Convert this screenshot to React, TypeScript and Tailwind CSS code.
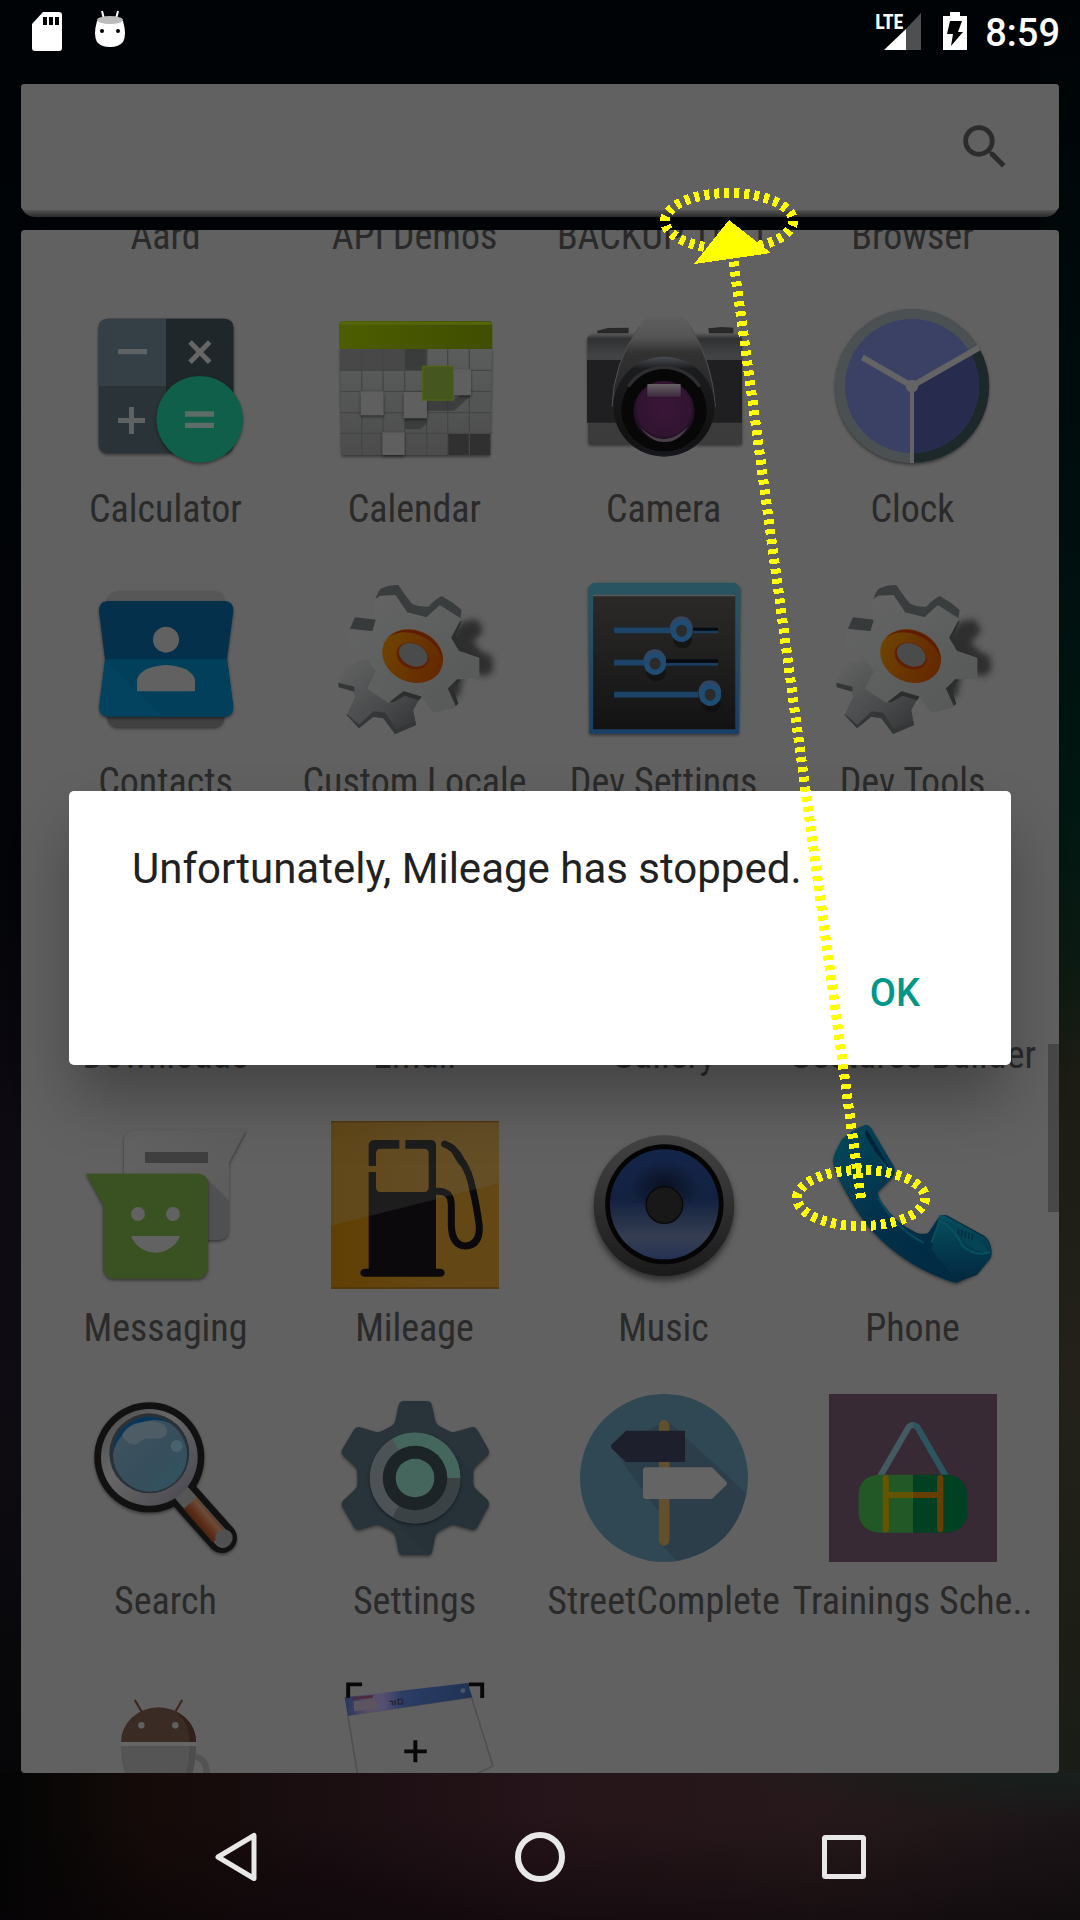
import React from "react";

type Art = { children: React.ReactNode; box: string };

function Art({ box, children }: Art) {
  return (
    <svg viewBox={box} preserveAspectRatio="none" className="size-42 shrink-0" aria-hidden="true">
      {children}
    </svg>
  );
}

const softShadow = { filter: "drop-shadow(0 5px 4px rgba(0,0,0,.45))" };

function CalculatorIcon() {
  return (
    <Art box="66 66 504 504">
      <g style={softShadow}>
        <rect x="116" y="116" width="404" height="404" rx="26" fill="#293338" />
        <path d="M318 116H142a26 26 0 0 0-26 26v176h202z" fill="#353f46" />
        <path d="M318 116h176a26 26 0 0 1 26 26v176H318z" fill="#1f272a" />
        <path d="M318 318h202v30H318z" fill="#1f272a" />
      </g>
      <path d="M174 207h87v16h-87zM174 414h33v-33h15v33h33v15h-33v33h-15v-33h-33z" fill="#5f6262" />
      <path d="M390 186l59 61M449 186l-59 61" stroke="#666" strokeWidth="15" />
      <circle cx="419" cy="418" r="130" fill="#0f5f4a" style={softShadow} />
      <path d="M375 394h87v16h-87zM375 428h87v16h-87z" fill="#5b6d66" />
    </Art>
  );
}

function CalendarIcon() {
  return (
    <Art box="813 66 504 504">
      <defs>
        <linearGradient id="calSheet" x1="0" y1="0" x2="0" y2="1">
          <stop offset="0" stopColor="#5b5d5d" />
          <stop offset="1" stopColor="#4c4c4c" />
        </linearGradient>
        <linearGradient id="calTop" x1="0" y1="0" x2="1" y2="0">
          <stop offset="0" stopColor="#4d5d00" />
          <stop offset="1" stopColor="#3f4e00" />
        </linearGradient>
      </defs>
      <path d="M840 205h456l-6 320H845z" fill="url(#calSheet)" style={softShadow} />
      <path d="M840 205h262v66H840z" fill="#484848" />
      <path d="M1034 205h66v66h-66z" fill="#3a3b3b" />
      <path d="M1161 460h130v65h-130z" fill="#303030" />
      <path d="M905 205v320M969 205v320M1034 205v320M1100 205v320M1163 205v320M1228 205v320M840 271h455M840 334h455M840 398h455M840 460h455" stroke="#444646" strokeWidth="4" />
      <path d="M1100 360h80l22-14h31l-50 46h-83v40l-20 16h-45v-32z" fill="#2f3030" opacity=".6" />
      <g style={softShadow}>
        <path d="M902 334h69v72h-69zM1031 336h70v79h-70zM967 457h67v68h-67zM1180 268h53v78h-53z" fill="#5f5f5f" />
      </g>
      <path d="M1088 259h92v101h-92z" fill="#45571e" stroke="#4c6414" strokeWidth="4" />
      <path d="M849 123h437q10 0 11 12v72H837v-72q2-12 12-12z" fill="url(#calTop)" />
      <path d="M849 125h437q8 0 10 9H839q2-9 10-9z" fill="#56660a" />
    </Art>
  );
}

function CameraIcon() {
  return (
    <Art box="120 66 504 504">
      <defs>
        <linearGradient id="camBody" x1="0" y1="0" x2="0" y2="1">
          <stop offset="0" stopColor="#5c5c5c" />
          <stop offset=".05" stopColor="#303132" />
          <stop offset=".2" stopColor="#424344" />
          <stop offset="1" stopColor="#3a3a3b" />
        </linearGradient>
        <linearGradient id="camHump" x1="0" y1="0" x2="0" y2="1">
          <stop offset="0" stopColor="#5e5e5e" />
          <stop offset=".22" stopColor="#555" />
          <stop offset=".4" stopColor="#323232" />
          <stop offset="1" stopColor="#242424" />
        </linearGradient>
        <linearGradient id="camRing" x1="0" y1="0" x2="0" y2="1">
          <stop offset="0" stopColor="#4a4e55" />
          <stop offset=".12" stopColor="#1b1c1e" />
          <stop offset=".8" stopColor="#111" />
          <stop offset="1" stopColor="#17171f" />
        </linearGradient>
        <radialGradient id="camGlass" cx=".5" cy=".45" r=".55">
          <stop offset="0" stopColor="#3a1538" />
          <stop offset=".8" stopColor="#301430" />
          <stop offset="1" stopColor="#100a10" />
        </radialGradient>
        <linearGradient id="camShine" x1="0" y1="0" x2="0" y2="1">
          <stop offset="0" stopColor="#666066" />
          <stop offset="1" stopColor="#3e2a3e" />
        </linearGradient>
      </defs>
      <path d="M172 152l32-8 62-1v26h-94zM505 145l40-4 35 2v24h-72z" fill="#292929" />
      <g style={softShadow}>
        <path d="M142 174q4-10 20-14h420q20 4 24 14v314q0 5-8 5H153q-7 0-8-5z" fill="url(#camBody)" />
      </g>
      <path d="M141 240h465v188H141z" fill="#1f1f22" />
      <path d="M330 112h90q22 4 32 28 66 110 74 240H216q4-130 82-240 12-24 32-28z" fill="url(#camHump)" />
      <path d="M216 380q4-130 82-240M452 140q66 110 74 240" fill="none" stroke="#505050" strokeWidth="3" />
      <ellipse cx="372" cy="380" rx="152" ry="150" fill="url(#camRing)" />
      <ellipse cx="372" cy="390" rx="128" ry="124" fill="#070707" />
      <path d="M265 320a125 120 0 0 1 214 0" fill="none" stroke="#2e2e30" strokeWidth="10" />
      <circle cx="372" cy="395" r="92" fill="url(#camGlass)" />
      <path d="M322 312h100v38H322z" fill="url(#camShine)" />
      <path d="M300 440q70 75 144 0-30 48-72 46-40 0-72-46z" fill="#5a525a" opacity=".75" />
    </Art>
  );
}

function ClockIcon() {
  return (
    <Art box="870 66 504 504">
      <g style={softShadow}>
        <circle cx="1119" cy="318" r="231" fill="#4b5153" />
      </g>
      <path d="M1119 318L1320 203A231 231 0 0 1 1119 549z" fill="#1d282b" />
      <circle cx="1119" cy="318" r="201" fill="#3b4165" />
      <path d="M1119 318L1293 218A201 201 0 0 1 1119 519z" fill="#272c4f" />
      <path d="M970 232L1119 318L1320 203" fill="none" stroke="#646464" strokeWidth="18" />
      <path d="M1119 318v231" stroke="#646464" strokeWidth="12" />
      <circle cx="1119" cy="318" r="19" fill="#646464" />
    </Art>
  );
}

function ContactsIcon() {
  return (
    <Art box="66 45 504 504">
      <g style={softShadow}>
        <rect x="143" y="93" width="349" height="407" rx="32" fill="#575757" />
        <rect x="143" y="440" width="349" height="60" rx="28" fill="#414141" />
      </g>
      <g style={softShadow}>
        <path d="M143 123h351q27 2 26 30l-19 144H135L117 153q-1-28 26-30z" fill="#04304b" />
        <path d="M135 297h366l19 144q0 27-27 29H144q-27-2-27-29z" fill="#034360" />
        <path d="M135 297l173 173h185q27-2 27-29l-19-144z" fill="#023f5b" />
      </g>
      <circle cx="318" cy="239" r="39" fill="#616161" />
      <path d="M231 394v-35q12-40 87-44 75 4 87 44v35z" fill="#616161" />
    </Art>
  );
}

function GearIcon({ id }: { id: string }) {
  return (
    <Art box="813 45 504 504">
      <defs>
        <linearGradient id={`${id}Face`} x1="0" y1="0" x2="1" y2="1">
          <stop offset="0" stopColor="#656565" />
          <stop offset="1" stopColor="#565858" />
        </linearGradient>
        <linearGradient id={`${id}Back`} x1="0" y1="0" x2="1" y2="1">
          <stop offset="0" stopColor="#646464" />
          <stop offset=".6" stopColor="#47494a" />
          <stop offset="1" stopColor="#303232" />
        </linearGradient>
        <linearGradient id={`${id}Hub`} x1="0" y1="0" x2="1" y2="0">
          <stop offset="0" stopColor="#6e4300" />
          <stop offset="1" stopColor="#652800" />
        </linearGradient>
        <filter id={`${id}Blur`} x="-50%" y="-50%" width="200%" height="200%">
          <feGaussianBlur stdDeviation="9" />
        </filter>
      </defs>
      <path d="M1170 230l35-45 45-8 20 35-30 35 25 28 30 12 6 45-28 18-60-25-15 80-30 20-40-60z" fill="#2e2e2e" filter={`url(#${id}Blur)`} />
      <path d="M835 370l15-52 75-21 25 38-25 50 60 40 45-35 55 15-25 45 8 45-63 27-35-47-30-5-43 35-37-40 25-55-5-18-45-12z" fill={`url(#${id}Back)`} />
      <path d="M835 368l48 12v15l-47-13zM860 462l38 32 43-40 35 4 32 50 57-25 3 12-63 27-35-47-30-5-43 35-37-40z" fill="#343737" />
      <path d="M945 120q10-30 20-35 26-12 50-10 22 34 42 57 24 10 48 8 20-22 40-32 34 18 60 42l-5 32-60-36-40 30-60-14-35-55z" fill="#3a3d3d" />
      <path d="M870 206l15-34 70 8-15 34z" fill="#373a3a" />
      <path d="M985 425l45-36 57 18-9 14-44-14-34 20zM1195 275l-25-43 28-52 6 4-18 46 26 38zM1185 440l-22-55 28-28 10 2-20 28 14 44z" fill="#2c2e2e" />
      <path
        d="M942 123l20-13 43-2 35 52 60 15 40-36 60 38-30 56 25 42 60 20v58l-65 2-30 30 25 55-65 15-35-48-55-17-45 35-60-40 25-50-25-38-60-25v-55l75-2 10-35z"
        fill={`url(#${id}Face)`}
        stroke={`url(#${id}Face)`}
        strokeWidth="6"
        strokeLinejoin="round"
      />
      <g transform="rotate(25 1058 288)">
        <ellipse cx="1058" cy="288" rx="94" ry="78" fill={`url(#${id}Hub)`} />
        <path d="M968 268a94 78 0 0 1 180 0 96 70 0 0 0-180 0z" fill="#5f1c00" />
        <ellipse cx="1058" cy="288" rx="50" ry="38" fill="#601f00" />
        <ellipse cx="1058" cy="284" rx="45" ry="33" fill="#4a4b4b" />
      </g>
    </Art>
  );
}

function Knob({ x, y }: { x: number; y: number }) {
  return (
    <g>
      <ellipse cx={x + 4} cy={y + 28} rx="28" ry="24" fill="#0d0d0d" opacity=".6" />
      <ellipse cx={x} cy={y - 9} rx="33" ry="34" fill="#37445e" />
      <ellipse cx={x + 1} cy={y} rx="24" ry="26" fill="#2b2b2b" stroke="#1f4c72" strokeWidth="16" />
    </g>
  );
}

function DevSettingsIcon() {
  return (
    <Art box="116 45 488 504">
      <defs>
        <linearGradient id="devFrame" x1="0" y1="0" x2="0" y2="1">
          <stop offset="0" stopColor="#285560" />
          <stop offset=".3" stopColor="#275064" />
          <stop offset="1" stopColor="#183f67" />
        </linearGradient>
        <linearGradient id="devPlate" x1="0" y1="0" x2="0" y2="1">
          <stop offset="0" stopColor="#2b2a29" />
          <stop offset="1" stopColor="#131313" />
        </linearGradient>
      </defs>
      <path d="M140 82l14-14h412l16 14-4 439H143z" fill="url(#devFrame)" style={softShadow} />
      <path d="M154 104h413v404H154z" fill="url(#devPlate)" />
      <path d="M154 106h413" stroke="#555a5c" strokeWidth="5" />
      <path d="M445 208h72M365 303h152" stroke="#060b12" strokeWidth="10" />
      <path d="M445 216h72M365 313h152" stroke="#1a3c5f" strokeWidth="8" />
      <path d="M215 211h165M215 308h90M215 404h245" stroke="#1c4468" strokeWidth="17" />
      <Knob x={410} y={212} />
      <Knob x={333} y={311} />
      <Knob x={493} y={404} />
    </Art>
  );
}

function MessagingIcon() {
  return (
    <Art box="66 273 504 504">
      <defs>
        <linearGradient id="msgBack" x1="0" y1="0" x2="1" y2="1">
          <stop offset="0" stopColor="#636363" />
          <stop offset="1" stopColor="#5a5a5a" />
        </linearGradient>
      </defs>
      <path d="M226 301h332l-51 97v200q-2 30-32 32H192V335q2-32 34-34z" fill="url(#msgBack)" style={softShadow} />
      <path d="M430 436l77 76v86q-2 30-32 32h-45z" fill="#4f5051" />
      <path d="M255 366h189v33H255z" fill="#404040" />
      <path d="M78 431h336q28 2 30 30v253q-2 30-32 32H161q-30-2-32-32V524z" fill="#3a5121" style={softShadow} />
      <circle cx="234" cy="552" r="21" fill="#626262" />
      <circle cx="339" cy="552" r="21" fill="#626262" />
      <path d="M213 618h147a79 79 0 0 1-147 0z" fill="#626262" />
    </Art>
  );
}

function MileageIcon() {
  return (
    <Art box="813 273 504 504">
      <defs>
        <linearGradient id="fuelBase" x1="0" y1="0" x2="1" y2="0">
          <stop offset="0" stopColor="#613f03" />
          <stop offset=".6" stopColor="#634714" />
          <stop offset="1" stopColor="#634815" />
        </linearGradient>
      </defs>
      <path d="M813 273h504v504H813z" fill="url(#fuelBase)" />
      <path d="M926 408v-62q2-16 18-16h74v26h-56q-14 0-14 14v38zM1036 330h76q16 0 16 16v370h14q12 2 12 12t-12 12H914q-13-2-13-12t13-12h12V426h22v46q0 14 14 14h130q14 0 14-14V370q0-14-14-14h-56z" fill="#0b090b" />
      <path d="M1128 484q46-4 46 42v60q2 60 42 62 44-2 42-60-8-60-20-110-8-50-36-90-16-34-48-46" fill="none" stroke="#0b090b" strokeWidth="21" strokeLinecap="round" strokeLinejoin="round" />
      <path d="M1178 360q30 10 37 40l-8 12q-10-4-29-40z" fill="#0b090b" />
      <path d="M813 273h504v187l-504 127z" fill="#666" opacity=".22" />
      <path d="M813 275h504M813 774h504" stroke="#4d3810" strokeWidth="4" />
    </Art>
  );
}

function MusicIcon() {
  return (
    <Art box="116 273 488 504">
      <defs>
        <linearGradient id="spkRim" x1="0" y1="0" x2="0" y2="1">
          <stop offset="0" stopColor="#444" />
          <stop offset="1" stopColor="#1a1a1a" />
        </linearGradient>
        <linearGradient id="spkCone" x1="0" y1="0" x2="0" y2="1">
          <stop offset="0" stopColor="#14264b" />
          <stop offset=".45" stopColor="#12213f" />
          <stop offset=".8" stopColor="#353e52" />
          <stop offset="1" stopColor="#243154" />
        </linearGradient>
        <radialGradient id="spkShade">
          <stop offset="0" stopColor="#0a1020" />
          <stop offset="1" stopColor="#0a1020" stopOpacity="0" />
        </radialGradient>
      </defs>
      <ellipse cx="360" cy="527" rx="204" ry="211" fill="url(#spkRim)" style={{ filter: "drop-shadow(0 14px 9px rgba(0,0,0,.5))" }} />
      <ellipse cx="361" cy="523" rx="172" ry="180" fill="#050505" />
      <ellipse cx="361" cy="523" rx="158" ry="165" fill="url(#spkCone)" />
      <ellipse cx="361" cy="470" rx="100" ry="80" fill="url(#spkShade)" />
      <ellipse cx="361" cy="525" rx="53" ry="55" fill="#181818" stroke="#080808" strokeWidth="4" />
    </Art>
  );
}

function PhoneIcon() {
  return (
    <Art box="842 273 488 504">
      <defs>
        <linearGradient id="handset" x1="0" y1="0" x2="1" y2="1">
          <stop offset="0" stopColor="#064c5e" />
          <stop offset=".45" stopColor="#03304a" />
          <stop offset="1" stopColor="#00283f" />
        </linearGradient>
        <linearGradient id="handsetEnd" x1="0" y1="0" x2="0" y2="1">
          <stop offset="0" stopColor="#07515f" />
          <stop offset=".45" stopColor="#043c50" />
          <stop offset="1" stopColor="#02283f" />
        </linearGradient>
      </defs>
      <path d="M948 284q10 0 18 12l66 116q4 12-4 28l-44 46q0 12 12 32 40 62 100 90 30 8 36-2l30-46q8-8 22-4l110 62q20 16 20 52-2 12-8 18l-34 42-58 28q-12 0-30-8-70-26-126-66-100-70-158-182-46-80-46-112 2-20 26-62 28-28 68-44z" fill="url(#handset)" style={softShadow} />
      <path d="M1162 556q8-4 22 4l110 62q20 16 20 52-2 12-8 18l-34 42-58 22-74-98z" fill="url(#handsetEnd)" />
      <path d="M1172 566q50 44 70 76 40 30 62 28-4-22-20-36-60-40-112-68z" fill="#044455" />
      <path d="M1140 638l24-66q40 20 66 76 40 34 80 18" fill="none" stroke="#08515f" strokeWidth="6" />
      <path d="M882 330q30-16 62-20l68 110M985 505q50 90 130 132" fill="none" stroke="#064a5b" strokeWidth="6" strokeLinecap="round" />
      <path d="M950 296q40 66 68 118-40-36-72-102z" fill="#02253a" />
      <path d="M1218 596v18M1228 600v20M1238 604v20M1248 608v20M1258 612v18" stroke="#022d3c" strokeWidth="4" />
    </Art>
  );
}

function SearchAppIcon() {
  return (
    <Art box="66 72 504 504">
      <defs>
        <linearGradient id="magRim" x1="0" y1="0" x2="1" y2="1">
          <stop offset="0" stopColor="#4a4a4a" />
          <stop offset=".4" stopColor="#676767" />
          <stop offset="1" stopColor="#45454e" />
        </linearGradient>
        <linearGradient id="magGlass" x1="0" y1="0" x2="1" y2="1">
          <stop offset="0" stopColor="#42535f" />
          <stop offset=".55" stopColor="#374e5c" />
          <stop offset="1" stopColor="#2f5460" />
        </linearGradient>
        <linearGradient id="magGrip" gradientUnits="userSpaceOnUse" x1="400" y1="470" x2="460" y2="420">
          <stop offset="0" stopColor="#3c1a0c" />
          <stop offset=".4" stopColor="#5f2f1a" />
          <stop offset=".7" stopColor="#6c4c3a" />
          <stop offset="1" stopColor="#4d2413" />
        </linearGradient>
      </defs>
      <g style={softShadow}>
        <path d="M372 376L486 504" stroke="#111" strokeWidth="90" strokeLinecap="round" />
        <circle cx="268" cy="262" r="165" fill="#111" />
      </g>
      <path d="M368 372L488 508" stroke="#555" strokeWidth="52" strokeLinecap="round" />
      <path d="M390 400L478 500" stroke="url(#magGrip)" strokeWidth="52" />
      <circle cx="492" cy="504" r="26" fill="#505050" />
      <circle cx="268" cy="262" r="145" fill="url(#magRim)" />
      <circle cx="268" cy="250" r="120" fill="#2a3238" />
      <circle cx="270" cy="254" r="111" fill="url(#magGlass)" />
      <path d="M158 252a112 112 0 0 1 172-94q-50-18-100 6-60 30-72 88z" fill="#07365c" />
      <path d="M186 196q20-40 84-42 50 2 52 30-2 26-44 22-30-4-46 16-30 8-46-26z" fill="#4e5c65" />
      <circle cx="350" cy="228" r="18" fill="#4a626b" />
    </Art>
  );
}

function SettingsIcon() {
  return (
    <Art box="813 72 504 504">
      <g style={softShadow}>
        <path d="M1030 93h72q12 1 14 14l10 46q3 10 12 15l30 16q8 3 18 1l50-14q10-2 16 8l34 60q3 10-4 18l-34 32q-8 8-8 18v36q0 8 8 16l34 32q7 8 4 18l-34 62q-6 10-16 8l-50-14q-10-2-18 2l-30 16q-9 6-12 15l-10 48q-2 8-12 9h-76q-10-1-12-9l-10-48q-3-10-12-15l-30-16q-8-4-18-2l-48 14q-10 2-16-8l-36-62q-3-10 4-18l34-32q8-8 8-16v-36q0-10-8-18l-34-32q-7-8-4-18l36-60q6-10 16-8l48 14q10 2 18-1l30-16q9-5 12-15l10-46q2-13 14-14z" fill="#28343a" />
      </g>
      <path d="M1165 230l74 74v36q0 8 8 16l34 32q7 8 4 18l-34 62q-6 10-16 8l-50-14q-10-2-18 2l-30 16q-9 6-12 15l-10 48-12 9-100-100z" fill="#263238" />
      <circle cx="1065" cy="324" r="136" fill="#4d5256" style={softShadow} />
      <path d="M1065 324L997 206A136 136 0 0 1 1201 324z" fill="#44665d" />
      <path d="M1065 324H1201A136 136 0 0 1 997 442z" fill="#3a4245" />
      <circle cx="1065" cy="324" r="97" fill="#1d2427" />
      <circle cx="1065" cy="324" r="58" fill="#45665d" />
    </Art>
  );
}

function StreetCompleteIcon() {
  return (
    <Art box="116 72 488 504">
      <ellipse cx="360" cy="324" rx="244" ry="252" fill="#304854" />
      <path d="M370 152l228 216q-28 170-202 204l-48-54V430L207 230z" fill="#2c3e4a" />
      <path d="M345 168q2-16 15-18 14 2 16 18v342q-2 16-16 18-13-2-15-18z" fill="#62502c" />
      <path d="M250 182h171v94H250l-43-42q-2-5 0-10z" fill="#1d202c" />
      <path d="M306 292h193l43 44q2 4 0 8l-43 43H306q-7-1-7-8v-79q0-7 7-8z" fill="#646464" />
    </Art>
  );
}

function TrainingsIcon() {
  return (
    <Art box="839 72 488 504">
      <path d="M839 72h488v504H839z" fill="#372a34" />
      <path d="M988 318l82-146q5-7 13-7" fill="none" stroke="#445a61" strokeWidth="18" />
      <path d="M1083 165q8 0 13 7l82 146" fill="none" stroke="#2d5560" strokeWidth="18" />
      <path d="M1083 314H983q-56 4-58 60v56q4 52 58 58h100z" fill="#215826" />
      <path d="M1083 314h100q54 4 58 60v56q-4 52-58 58h-100z" fill="#004124" />
      <path d="M1004 366h79v18h-79z" fill="#655500" />
      <path d="M1083 366h79v18h-79z" fill="#663f00" />
      <rect x="995" y="315" width="18" height="172" rx="9" fill="#655500" />
      <rect x="1153" y="315" width="18" height="172" rx="9" fill="#663f00" />
    </Art>
  );
}

function MugIcon() {
  return (
    <Art box="230 81 470 504">
      <path d="M379 182l17 32M509 182l-17 32" stroke="#3c281f" strokeWidth="6" strokeLinecap="round" />
      <path d="M339 306a105 104 0 0 1 210 0z" fill="#3a2c25" />
      <path d="M490 213q58 30 59 93h-18q0-60-41-93z" fill="#33201a" />
      <ellipse cx="396" cy="256" rx="9" ry="10" fill="#606060" />
      <ellipse cx="491" cy="256" rx="9" ry="10" fill="#606060" />
      <path d="M339 306h210v11H339z" fill="#666" />
      <path d="M339 318h210q0 60-20 110H360q-21-50-21-110z" fill="#555" />
      <path d="M530 318h19q0 60-20 110h-18q20-50 19-110z" fill="#4d4d4d" />
      <path d="M548 350q32 8 32 60" fill="none" stroke="#535353" strokeWidth="18" />
    </Art>
  );
}

function WidgetPreviewIcon() {
  return (
    <Art box="927 81 470 504">
      <defs>
        <linearGradient id="winBar" x1="0" y1="0" x2="1" y2="0">
          <stop offset="0" stopColor="#23355e" />
          <stop offset=".18" stopColor="#5b4d66" />
          <stop offset=".3" stopColor="#565072" />
          <stop offset=".45" stopColor="#2c3d66" />
          <stop offset="1" stopColor="#1f3254" />
        </linearGradient>
      </defs>
      <path d="M974 226l346-54 60 206-120 62-250 20z" fill="#606060" stroke="#4e4e4e" strokeWidth="4" />
      <path d="M965 172l345-43 12 43-348 55z" fill="url(#winBar)" />
      <path d="M990 184l62-6 6 28-66 8z" fill="#5c5560" />
      <path d="M988 172l56-7v8l-56 7z" fill="#4d2a3c" />
      <path d="M1090 184h9v12M1106 180v16M1115 178v14h12v-14z" fill="none" stroke="#26223a" strokeWidth="4" />
      <circle cx="1296" cy="152" r="7" fill="#4b5568" />
      <path d="M975 173v-40h39M1312 133h38v41" fill="none" stroke="#080808" strokeWidth="11" />
      <path d="M1132 334h63M1163 301v66" stroke="#080808" strokeWidth="11" />
    </Art>
  );
}

const apps: { name: string; icon?: React.ReactNode }[] = [
  { name: "Aard" },
  { name: "API Demos" },
  { name: "BACKUP TEST" },
  { name: "Browser" },
  { name: "Calculator", icon: <CalculatorIcon /> },
  { name: "Calendar", icon: <CalendarIcon /> },
  { name: "Camera", icon: <CameraIcon /> },
  { name: "Clock", icon: <ClockIcon /> },
  { name: "Contacts", icon: <ContactsIcon /> },
  { name: "Custom Locale", icon: <GearIcon id="locale" /> },
  { name: "Dev Settings", icon: <DevSettingsIcon /> },
  { name: "Dev Tools", icon: <GearIcon id="tools" /> },
  { name: "Downloads" },
  { name: "Email" },
  { name: "Gallery" },
  { name: "Gestures Builder" },
  { name: "Messaging", icon: <MessagingIcon /> },
  { name: "Mileage", icon: <MileageIcon /> },
  { name: "Music", icon: <MusicIcon /> },
  { name: "Phone", icon: <PhoneIcon /> },
  { name: "Search", icon: <SearchAppIcon /> },
  { name: "Settings", icon: <SettingsIcon /> },
  { name: "StreetComplete", icon: <StreetCompleteIcon /> },
  { name: "Trainings Sche..", icon: <TrainingsIcon /> },
  { name: "", icon: <MugIcon /> },
  { name: "", icon: <WidgetPreviewIcon /> },
];

function StatusBar() {
  return (
    <header className="relative flex h-[72px] shrink-0 items-start justify-between pt-2 pr-5 pl-8 text-white">
      <div className="flex gap-8">
        <svg viewBox="0 0 30 44" className="h-11 w-[30px]" aria-hidden="true">
          <path d="M11 4h16q3 0 3 3v33q0 3-3 3H3q-3 0-3-3V16z" fill="#fff" />
          <path d="M11 9h4v8h-4zM17 9h4v8h-4zM23 9h4v8h-4z" fill="#000" />
        </svg>
        <svg viewBox="0 0 32 44" className="h-11 w-8" aria-hidden="true">
          <path d="M8 3l2 8M24 3l-2 8" stroke="#fff" strokeWidth="2" />
          <path d="M3 13h26q4 14 0 21-4 5-13 5t-13-5q-4-7 0-21z" fill="#fff" />
          <ellipse cx="16" cy="12" rx="13" ry="4" fill="#bbb" />
          <circle cx="8" cy="23" r="2" fill="#000" />
          <circle cx="24" cy="23" r="2" fill="#000" />
        </svg>
      </div>
      <div className="flex">
        <div className="relative h-11 w-[46px]">
          <svg viewBox="0 0 46 44" className="h-11 w-[46px]" aria-hidden="true">
            <path d="M46 5v37H30V22z" fill="#4d4f50" />
            <path d="M31 21v21H9z" fill="#fff" />
          </svg>
          <span className="absolute top-0 left-0 font-['Roboto_Condensed','Liberation_Sans_Narrow',sans-serif] text-xl leading-7 font-bold">
            LTE
          </span>
        </div>
        <svg viewBox="0 0 24 44" className="ml-[22px] h-11 w-6" aria-hidden="true">
          <path d="M7 4h10v4h7v34H0V8h7z" fill="#fff" />
          <path d="M7 13h12l-4 11h5L8 38l2-12H4z" fill="#000" />
        </svg>
        <span className="ml-[18px] text-[38px] leading-[50px] font-medium">8:59</span>
      </div>
    </header>
  );
}

function Annotation() {
  return (
    <svg
      viewBox="0 0 1080 1920"
      preserveAspectRatio="xMidYMid meet"
      className="pointer-events-none absolute inset-0 z-20 size-full"
      fill="none"
      stroke="#ff0"
      strokeWidth="10"
      strokeDasharray="5 5"
      shapeRendering="crispEdges"
      aria-hidden="true"
    >
      <ellipse cx="729" cy="221" rx="64" ry="28" />
      <ellipse cx="861" cy="1198" rx="64" ry="28" />
      <path d="M861 1198L732 250" />
      <path d="M729 220L694 264L771 253z" fill="#ff0" stroke="none" />
    </svg>
  );
}

export default function App() {
  return (
    <div className="relative flex h-screen min-h-[1200px] flex-col overflow-hidden bg-[#000305] font-['Roboto',sans-serif]">
      <div className="absolute inset-y-0 right-0 w-10 bg-[linear-gradient(180deg,#000305_0%,#000f0e_28%,#001711_42%,#0b1a12_50%,#1c1c14_56%,#23211a_72%,#1c1e16_86%,#181d1a_100%)]" />
      <div className="absolute inset-y-0 left-0 w-10 bg-[linear-gradient(180deg,#000305_0%,#020407_45%,#0e0a12_60%,#100c13_72%,#08080b_86%,#050505_100%)]" />

      <StatusBar />

      <main className="relative flex min-h-0 flex-1 flex-col px-[21px] pt-3">
        <div className="relative z-[1] flex h-[133px] shrink-0 rounded-t-[4px] rounded-b-[14px] bg-[linear-gradient(180deg,#525252_95%,#2b2b2b_100%)] pb-[7px]">
          <div className="flex flex-1 items-center rounded-[4px] bg-[#616161] pr-[45px]">
            <input
              type="search"
              aria-label="Search apps"
              className="h-full min-w-0 flex-1 bg-transparent px-8 text-4xl text-[#2a2a2a] outline-none"
            />
            <button type="button" aria-label="Search">
              <svg viewBox="0 0 24 24" className="size-[58px]" fill="#2c2c2c" aria-hidden="true">
                <path d="M15.5 14h-.79l-.28-.27A6.471 6.471 0 0 0 16 9.5 6.5 6.5 0 1 0 9.5 16c1.61 0 3.09-.59 4.23-1.57l.27.28v.79l5 4.99L20.49 19l-4.99-5zm-6 0C7.01 14 5 11.99 5 9.5S7.01 5 9.5 5 14 7.01 14 9.5 11.99 14 9.5 14z" />
              </svg>
            </button>
          </div>
        </div>

        <section aria-label="All apps" className="relative mt-[13px] min-h-0 flex-1 overflow-hidden rounded-[4px] bg-[#616161]">
          <ul className="-mt-[201px] grid grid-cols-4 pr-[22px] pl-5">
            {apps.map((app, i) => (
              <li key={i} className="h-[273px] min-w-0">
                <button type="button" className="flex w-full flex-col items-center">
                  {app.icon ?? <span className="size-42" />}
                  <span className="mt-[15px] h-12 font-['Roboto_Condensed','Liberation_Sans_Narrow',sans-serif] text-[38px] leading-[48px] whitespace-nowrap text-[#2a2a2a]">
                    {app.name}
                  </span>
                </button>
              </li>
            ))}
          </ul>
          <div className="absolute top-[814px] right-0 h-42 w-[11px] bg-[#484848]" />
        </section>
      </main>

      <nav className="relative flex h-[147px] shrink-0 items-center justify-center bg-[radial-gradient(ellipse_at_100%_0%,#17211d_0%,transparent_22%),linear-gradient(180deg,transparent_30%,#07030680_100%),linear-gradient(90deg,#030404_0%,#150b09_14%,#1a0e11_30%,#251419_50%,#27191b_75%,#1b1517_100%)] pt-5">
        <button type="button" aria-label="Back" className="flex w-[304px] justify-center">
          <svg viewBox="0 0 56 56" className="size-14" aria-hidden="true">
            <path d="M46 6.500v43L10 28z" fill="none" stroke="#e8e8e8" strokeWidth="5" strokeLinejoin="round" />
          </svg>
        </button>
        <button type="button" aria-label="Home" className="flex w-[304px] justify-center">
          <svg viewBox="0 0 56 56" className="size-14" aria-hidden="true">
            <circle cx="28" cy="28" r="22" fill="none" stroke="#e8e8e8" strokeWidth="6" />
          </svg>
        </button>
        <button type="button" aria-label="Recent apps" className="flex w-[304px] justify-center">
          <svg viewBox="0 0 56 56" className="size-14" aria-hidden="true">
            <rect x="8.500" y="8.500" width="39" height="39" rx="1" fill="none" stroke="#e8e8e8" strokeWidth="5" strokeLinejoin="round" />
          </svg>
        </button>
      </nav>

      <div className="absolute inset-0 z-10 flex items-center px-[69px] pt-20 pb-36">
        <div
          role="alertdialog"
          aria-labelledby="crash-message"
          className="flex w-full flex-col rounded-[5px] bg-white px-[63px] pt-[50px] pb-[42px] shadow-[0_36px_60px_-6px_rgba(0,0,0,0.33)]"
        >
          <p id="crash-message" className="text-[42px] leading-14 text-[#212121]">
            Unfortunately, Mileage has stopped.
          </p>
          <button type="button" className="mt-[66px] mr-7 self-end text-[38px] leading-[60px] font-medium text-[#009688]">
            OK
          </button>
        </div>
      </div>

      <Annotation />
    </div>
  );
}
